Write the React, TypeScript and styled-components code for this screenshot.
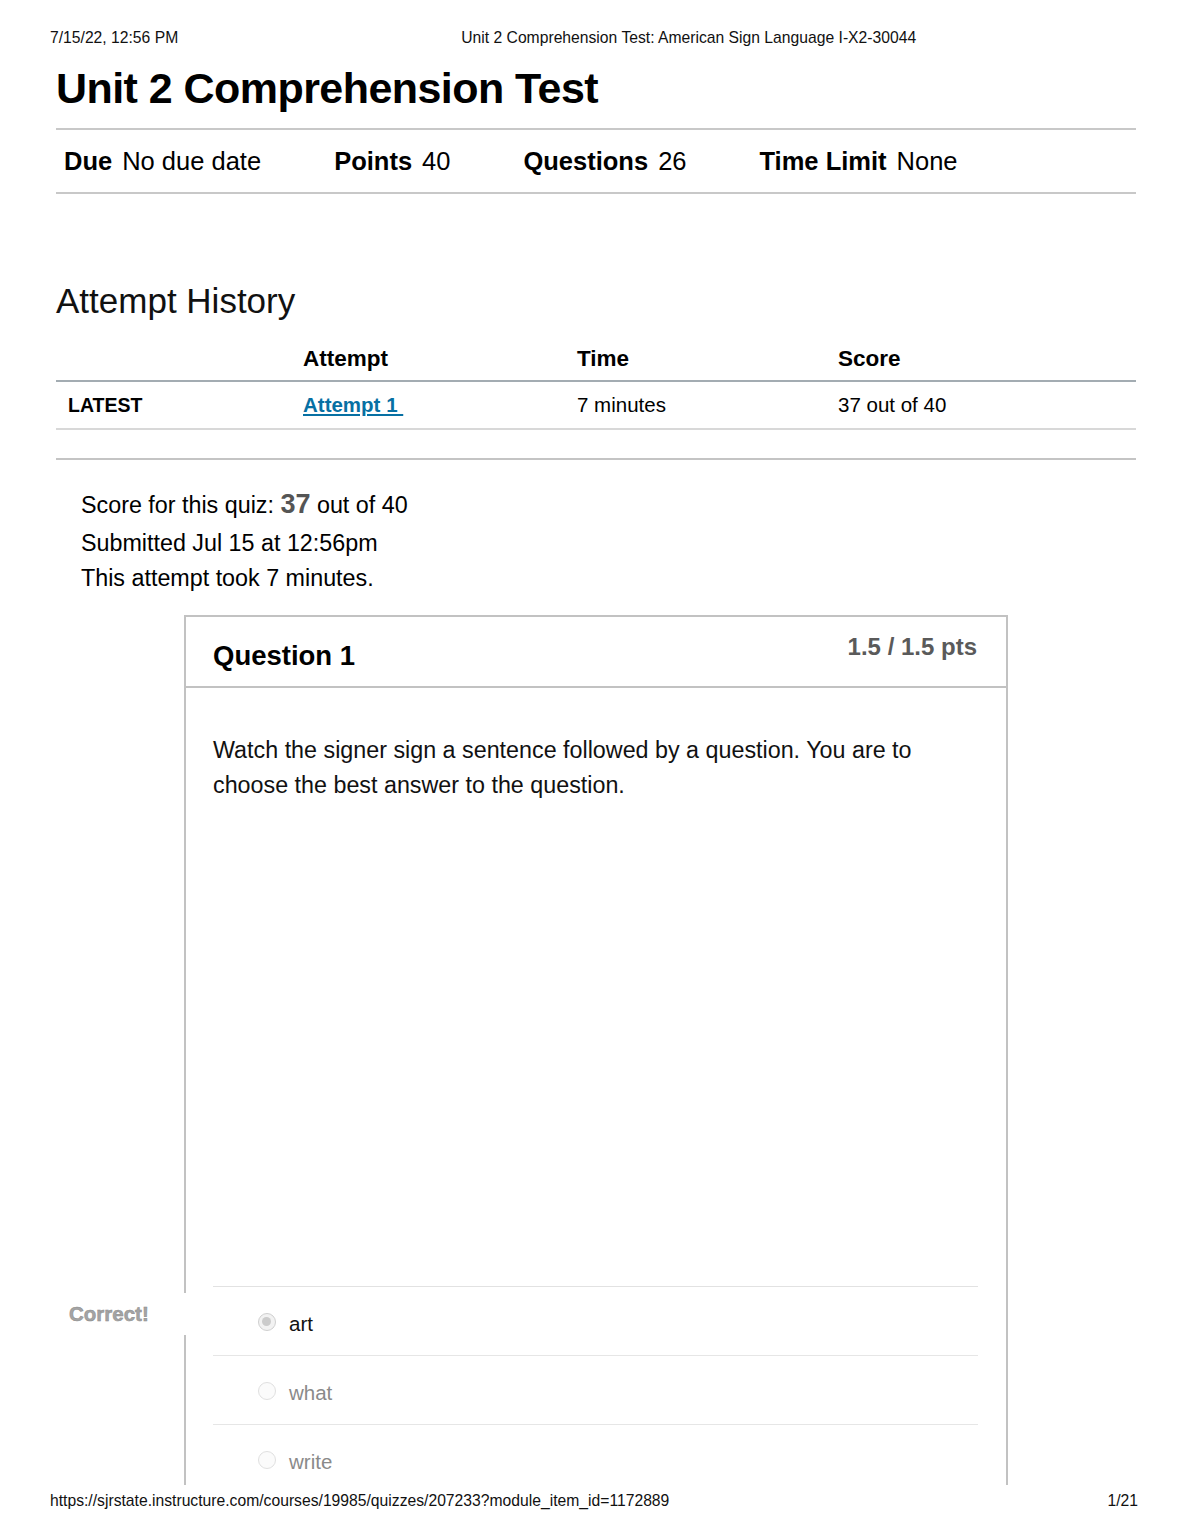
import React from "react";
import styled, { createGlobalStyle } from "styled-components";

const GlobalStyle = createGlobalStyle`
  html, body {
    margin: 0;
    padding: 0;
    background: #fff;
  }
  body {
    font-family: "Liberation Sans", Arial, Helvetica, sans-serif;
    color: #000;
  }
`;

const Page = styled.div`
  width: 1190px;
  height: 1540px;
  display: flex;
  flex-direction: column;
  overflow: hidden;
`;

const PrintBar = styled.div<{ $top?: number }>`
  display: flex;
  align-items: center;
  height: 18px;
  padding: 0 52px 0 50px;
  margin-top: ${(p) => p.$top ?? 0}px;
  font-size: 15.7px;
  line-height: 18px;
  color: #111;
  white-space: nowrap;
`;

const PrintTitle = styled.div`
  margin-left: 283px;
`;

const PrintPageNo = styled.div`
  margin-left: auto;
`;

const Main = styled.div`
  height: 1438px;
  padding: 0 54px 0 56px;
  overflow: hidden;
  flex: none;
`;

const Title = styled.h1`
  margin: 16px 0 15px;
  font-size: 43px;
  line-height: 50px;
  font-weight: bold;
  letter-spacing: -0.55px;
`;

const Details = styled.div`
  display: flex;
  border-top: 2px solid #c8c8c8;
  border-bottom: 2px solid #c8c8c8;
  padding: 17px 0 17px 8px;
  font-size: 25.5px;
  line-height: 28px;
`;

const DetailItem = styled.div`
  margin-right: 73px;
  white-space: nowrap;
`;

const DetailLabel = styled.span`
  font-weight: bold;
  margin-right: 10px;
`;

const SectionTitle = styled.h2`
  margin: 87px 0 16px;
  font-size: 35px;
  line-height: 40px;
  font-weight: normal;
  color: #111;
`;

const Table = styled.div`
  display: grid;
  grid-template-columns: 235px 274px 261px 1fr;
`;

const HeadCell = styled.div`
  height: 43px;
  display: flex;
  align-items: center;
  padding-left: 12px;
  font-size: 22.5px;
  font-weight: bold;
  border-bottom: 2px solid #a3acb2;
`;

const Cell = styled.div<{ $strong?: boolean }>`
  height: 46px;
  display: flex;
  align-items: center;
  padding-left: 12px;
  font-size: ${(p) => (p.$strong ? "19.5px" : "20.5px")};
  font-weight: ${(p) => (p.$strong ? "bold" : "normal")};
  border-bottom: 2px solid #d8d8d8;
`;

const AttemptLink = styled.a`
  color: #0770a3;
  font-weight: bold;
  text-decoration: underline;
  white-space: pre;
`;

const Divider = styled.div`
  margin-top: 28px;
  border-top: 2px solid #c4c4c4;
`;

const Summary = styled.div`
  margin: 22px 0 19px 25px;
  font-size: 23.3px;
`;

const SummaryLine = styled.div<{ $h: number }>`
  line-height: ${(p) => p.$h}px;
  height: ${(p) => p.$h}px;
`;

const ScoreValue = styled.span`
  font-size: 27px;
  font-weight: bold;
  color: #555;
`;

const QuestionBox = styled.div`
  margin-left: 128px;
  width: 824px;
  box-sizing: border-box;
  border: 2px solid #c2c2c2;
  border-bottom: none;
`;

const QuestionHeader = styled.div`
  display: flex;
  justify-content: space-between;
  align-items: flex-start;
  height: 71px;
  box-sizing: border-box;
  padding: 16px 29px 0 27px;
  border-bottom: 2px solid #c2c2c2;
`;

const QuestionName = styled.div`
  margin-top: 7px;
  font-size: 27.5px;
  line-height: 32px;
  font-weight: bold;
`;

const QuestionPoints = styled.div`
  font-size: 24px;
  line-height: 28px;
  font-weight: bold;
  color: #5a5a5a;
`;

const QuestionBody = styled.div`
  padding: 45px 28px 0 27px;
`;

const QuestionText = styled.div`
  font-size: 23.3px;
  line-height: 35px;
  color: #111;
`;

const VideoFrame = styled.div`
  height: 483px;
`;

const Answers = styled.div`
  border-top: 1px solid #e2e2e2;
`;

const AnswerRow = styled.div`
  position: relative;
  display: flex;
  align-items: center;
  height: 69px;
  box-sizing: border-box;
  padding: 6px 0 0 45px;
  border-bottom: 1px solid #e6e6e6;
`;

const Radio = styled.span<{ $checked?: boolean }>`
  position: relative;
  width: 18px;
  height: 18px;
  margin-top: -5px;
  box-sizing: border-box;
  border-radius: 50%;
  border: 1.5px solid ${(p) => (p.$checked ? "#cfcfcf" : "#e0e0e0")};
  background: ${(p) => (p.$checked ? "#f2f2f2" : "#fbfbfb")};
  flex: none;
  &::after {
    content: "";
    display: ${(p) => (p.$checked ? "block" : "none")};
    position: absolute;
    left: 3px;
    top: 3px;
    width: 9px;
    height: 9px;
    border-radius: 50%;
    background: #cbcbcb;
  }
`;

const AnswerText = styled.span<{ $muted?: boolean }>`
  margin-left: 13px;
  font-size: 20.5px;
  color: ${(p) => (p.$muted ? "#8a8a8a" : "#111")};
`;

const CorrectFlag = styled.div`
  position: absolute;
  left: -153px;
  top: 6px;
  width: 126px;
  height: 42px;
  padding-left: 9px;
  box-sizing: border-box;
  background: #fff;
  font-size: 20.5px;
  line-height: 42px;
  font-weight: bold;
  color: #a4a4a4;
  -webkit-text-stroke: 0.5px #8c8c8c;
`;

const answers = [
  { text: "art", checked: true },
  { text: "what", checked: false },
  { text: "write", checked: false },
];

export default function App() {
  return (
    <>
      <GlobalStyle />
      <Page>
        <PrintBar $top={29}>
          <div>7/15/22, 12:56 PM</div>
          <PrintTitle>Unit 2 Comprehension Test: American Sign Language I-X2-30044</PrintTitle>
        </PrintBar>

        <Main>
          <Title>Unit 2 Comprehension Test</Title>
          <Details>
            <DetailItem>
              <DetailLabel>Due</DetailLabel>No due date
            </DetailItem>
            <DetailItem>
              <DetailLabel>Points</DetailLabel>40
            </DetailItem>
            <DetailItem>
              <DetailLabel>Questions</DetailLabel>26
            </DetailItem>
            <DetailItem>
              <DetailLabel>Time Limit</DetailLabel>None
            </DetailItem>
          </Details>

          <SectionTitle>Attempt History</SectionTitle>
          <Table>
            <HeadCell />
            <HeadCell>Attempt</HeadCell>
            <HeadCell>Time</HeadCell>
            <HeadCell>Score</HeadCell>
            <Cell $strong>LATEST</Cell>
            <Cell>
              <AttemptLink href="#">Attempt 1 </AttemptLink>
            </Cell>
            <Cell>7 minutes</Cell>
            <Cell>37 out of 40</Cell>
          </Table>
          <Divider />

          <Summary>
            <SummaryLine $h={44}>
              Score for this quiz: <ScoreValue>37</ScoreValue> out of 40
            </SummaryLine>
            <SummaryLine $h={35}>Submitted Jul 15 at 12:56pm</SummaryLine>
            <SummaryLine $h={35}>This attempt took 7 minutes.</SummaryLine>
          </Summary>

          <QuestionBox>
            <QuestionHeader>
              <QuestionName>Question 1</QuestionName>
              <QuestionPoints>1.5 / 1.5 pts</QuestionPoints>
            </QuestionHeader>
            <QuestionBody>
              <QuestionText>
                Watch the signer sign a sentence followed by a question. You are to choose the best
                answer to the question.
              </QuestionText>
              <VideoFrame />
              <Answers>
                {answers.map((a) => (
                  <AnswerRow key={a.text}>
                    {a.checked && <CorrectFlag>Correct!</CorrectFlag>}
                    <Radio $checked={a.checked} />
                    <AnswerText $muted={!a.checked}>{a.text}</AnswerText>
                  </AnswerRow>
                ))}
              </Answers>
            </QuestionBody>
          </QuestionBox>
        </Main>

        <PrintBar $top={7}>
          <div>https://sjrstate.instructure.com/courses/19985/quizzes/207233?module_item_id=1172889</div>
          <PrintPageNo>1/21</PrintPageNo>
        </PrintBar>
      </Page>
    </>
  );
}
